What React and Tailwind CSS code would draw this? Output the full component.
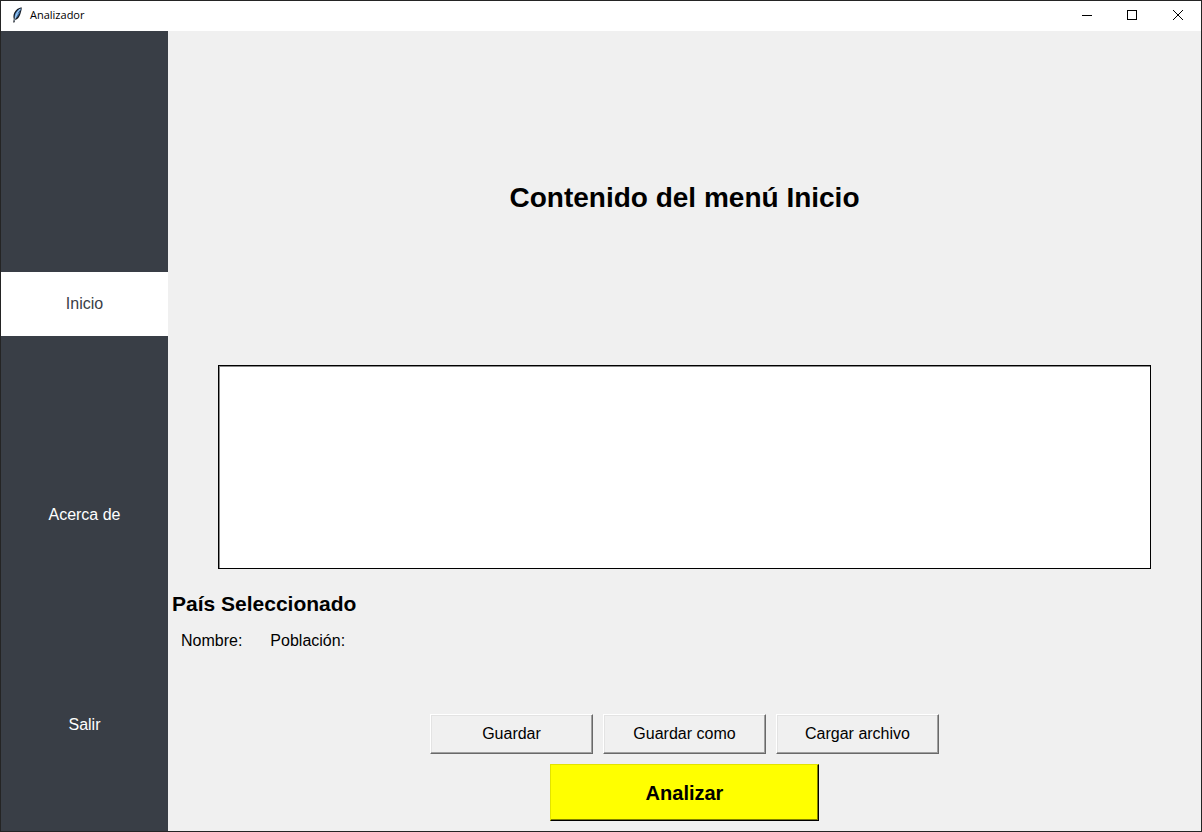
import React from "react";

const NAV_ITEMS = ["Inicio", "Acerca de", "Salir"];
const FILE_ACTIONS = ["Guardar", "Guardar como", "Cargar archivo"];

function FeatherIcon() {
  return (
    <svg width="16" height="16" viewBox="0 0 16 16" aria-hidden="true">
      <path
        d="M12.6 0.2 C9.4 0.8 6.6 2.8 5.4 5.6 C4.2 8 4.2 10.2 4.8 12 L4.2 15.6 L5.4 15.6 L6.2 13 C8.6 12.4 10.6 10 11.4 7 C12 4.6 13 2.4 12.6 0.2 Z"
        fill="#151b24"
      />
      <path
        d="M11.8 1.2 C9.4 2.2 7.4 4.2 6.4 6.6 C5.6 8.8 5.5 10.2 5.9 11.4 C8 10.8 9.6 8.8 10.4 6.2 C10.9 4.4 11.9 2.8 11.8 1.2 Z"
        fill="#5f9fe0"
      />
      <path d="M11.2 2 C8.4 5.2 6.8 8.6 5.5 13.6" fill="none" stroke="#c8e0f5" strokeWidth="0.8" />
      <path d="M11.2 3.6 L9.2 6.4 M10.4 6.6 L8 9.6" fill="none" stroke="#1f3a5c" strokeWidth="0.7" />
    </svg>
  );
}

function WindowButton({ label, children }) {
  return (
    <button type="button" aria-label={label} className="flex h-7 w-[46px] items-center justify-center">
      <svg width="12" height="12" viewBox="0 0 12 12" fill="none" stroke="#000" shapeRendering="crispEdges">
        {children}
      </svg>
    </button>
  );
}

function TitleBar() {
  return (
    <header className="flex h-[30px] shrink-0 items-start bg-white pl-2">
      <div className="flex h-7 flex-1 items-center gap-[5px]">
        <FeatherIcon />
        <h1 className="font-['Open_Sans','Noto_Sans',sans-serif] text-[11px] text-black">Analizador</h1>
      </div>
      <WindowButton label="Minimizar">
        <path d="M2 6.5H12" />
      </WindowButton>
      <WindowButton label="Maximizar">
        <rect x="1.5" y="1.5" width="9" height="9" />
      </WindowButton>
      <WindowButton label="Cerrar">
        <path d="M1 1L11 11M11 1L1 11" shapeRendering="auto" />
      </WindowButton>
    </header>
  );
}

function Sidebar() {
  return (
    <nav className="flex w-[167px] shrink-0 flex-col justify-between bg-[#393e46] pt-[241px] pb-[74px]">
      {NAV_ITEMS.map((item, index) => (
        <button
          key={item}
          type="button"
          className={index === 0 ? "h-16 bg-white text-[#393e46]" : "h-16 text-white"}
        >
          {item}
        </button>
      ))}
    </nav>
  );
}

export default function App() {
  return (
    <div className="flex min-h-screen flex-col border border-[#242424] bg-[#f0f0f0] font-['Liberation_Sans',Arial,sans-serif] text-base text-black">
      <TitleBar />
      <div className="flex flex-1">
        <Sidebar />
        <main className="flex min-w-0 flex-1 flex-col pb-2.5">
          <div className="flex flex-1 items-center justify-center">
            <h2 className="text-[28px] font-bold">Contenido del menú Inicio</h2>
          </div>
          <div className="flex px-[50px]">
            <textarea
              aria-label="Contenido"
              className="h-[204px] w-full resize-none border border-black bg-white p-1 shadow-[inset_1px_1px_0_#8a8a8a] outline-none"
            />
          </div>
          <section className="mt-5 pl-1">
            <h3 className="text-[21px] leading-[30px] font-bold">País Seleccionado</h3>
            <div className="mt-2.5 flex gap-7 pl-[9px] leading-6">
              <p>Nombre:</p>
              <p>Población:</p>
            </div>
          </section>
          <div className="mt-[61px] flex justify-center gap-2.5">
            {FILE_ACTIONS.map((action) => (
              <button
                key={action}
                type="button"
                className="h-10 w-[163px] border border-t-white border-r-[#696969] border-b-[#696969] border-l-white shadow-[inset_-1px_-1px_0_#a0a0a0,inset_1px_1px_0_#e3e3e3]"
              >
                {action}
              </button>
            ))}
          </div>
          <button
            type="button"
            className="mt-2.5 h-[57px] w-[269px] self-center border border-t-[#e3e300] border-r-black border-b-black border-l-[#e3e300] bg-[#ffff00] text-xl font-bold shadow-[inset_-1px_-1px_0_#808000]"
          >
            Analizar
          </button>
        </main>
      </div>
    </div>
  );
}
